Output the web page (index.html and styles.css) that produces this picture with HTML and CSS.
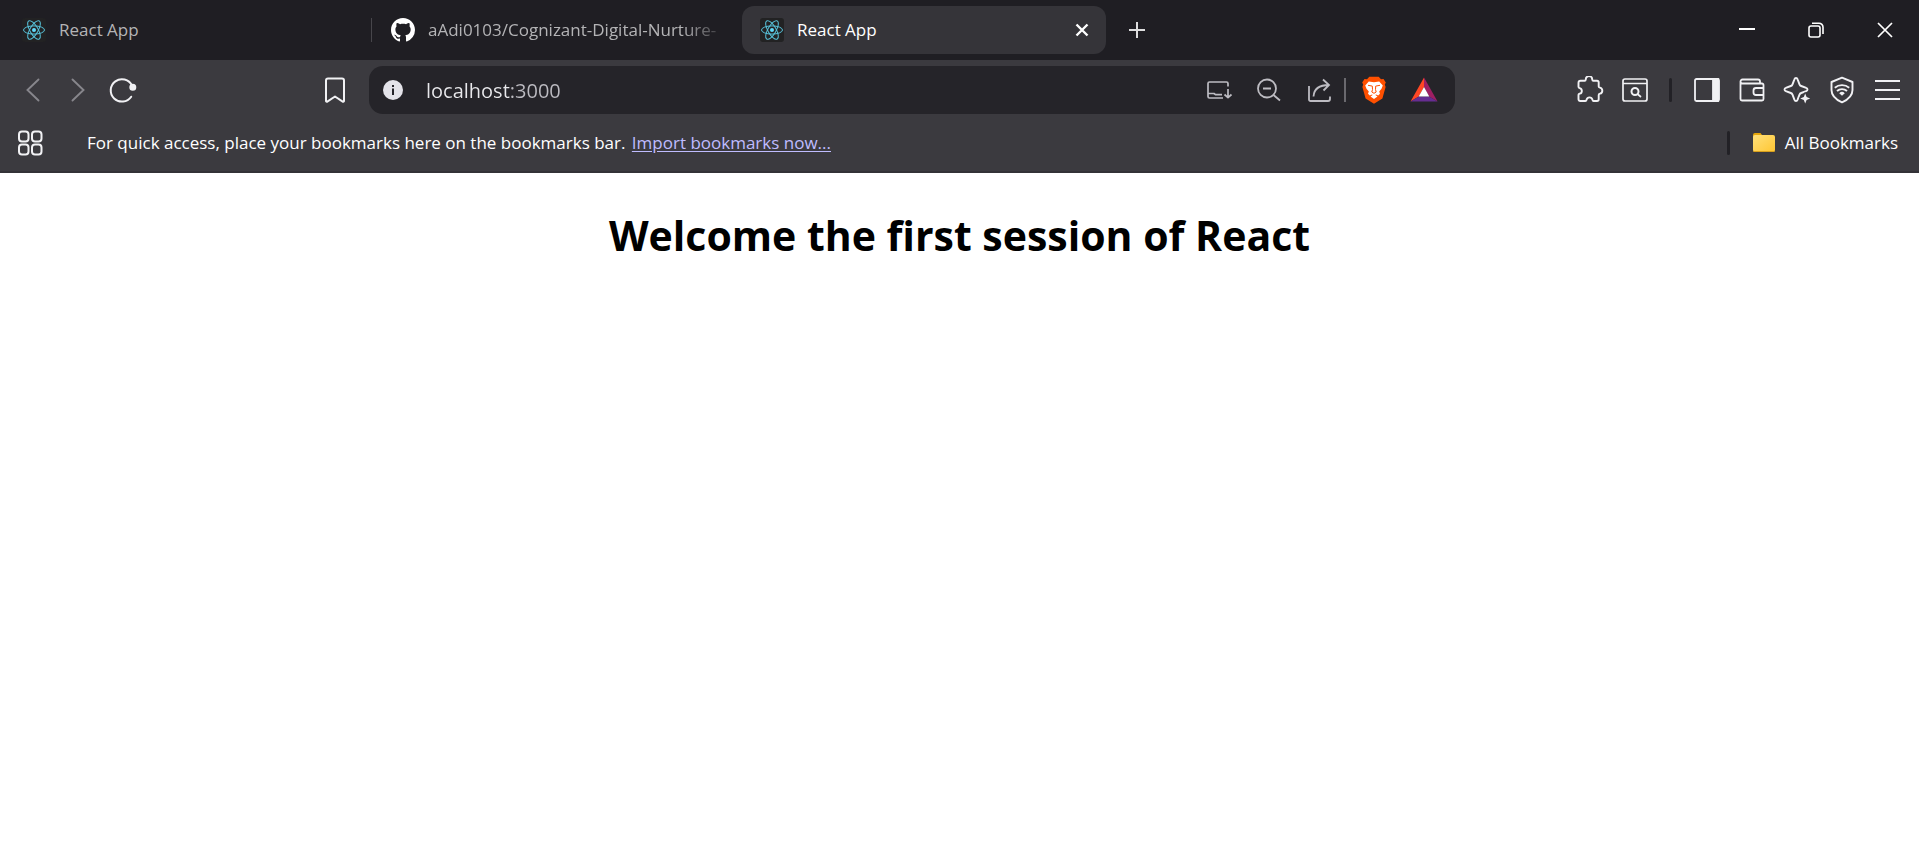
FILE: index.html
```html
<!DOCTYPE html>
<html lang="en">
<head>
<meta charset="utf-8">
<title>React App</title>
<link rel="stylesheet" href="styles.css">
</head>
<body>
<svg class="defs" aria-hidden="true">
  <symbol id="react" viewBox="0 0 24 24">
    <rect width="24" height="24" rx="3" fill="#222223"/>
    <g fill="none" stroke="#58c4dc" stroke-width="1">
      <ellipse cx="12" cy="12" rx="10.5" ry="4.1"/>
      <ellipse cx="12" cy="12" rx="10.5" ry="4.1" transform="rotate(60 12 12)"/>
      <ellipse cx="12" cy="12" rx="10.5" ry="4.1" transform="rotate(120 12 12)"/>
    </g>
    <circle cx="12" cy="12" r="2" fill="#61dafb"/>
  </symbol>
</svg>

<header class="browser">
  <div class="tabstrip">
    <nav class="tabs" aria-label="Tabs">
      <div class="tab">
        <svg class="icon-24"><use href="#react"/></svg>
        <span class="tab-title">React App</span>
      </div>
      <span class="tab-divider"></span>
      <div class="tab">
        <svg class="icon-24" viewBox="0 0 16 16" fill="#fff"><path d="M8 0C3.58 0 0 3.58 0 8c0 3.54 2.29 6.53 5.47 7.59.4.07.55-.17.55-.38 0-.19-.01-.82-.01-1.49-2.01.37-2.53-.49-2.69-.94-.09-.23-.48-.94-.82-1.13-.28-.15-.68-.52-.01-.53.63-.01 1.08.58 1.23.82.72 1.21 1.87.87 2.33.66.07-.52.28-.87.51-1.07-1.78-.2-3.64-.89-3.64-3.95 0-.87.31-1.59.82-2.15-.08-.2-.36-1.02.08-2.12 0 0 .67-.21 2.2.82.64-.18 1.32-.27 2-.27s1.36.09 2 .27c1.53-1.04 2.2-.82 2.2-.82.44 1.1.16 1.92.08 2.12.51.56.82 1.27.82 2.15 0 3.07-1.87 3.75-3.65 3.95.29.25.54.73.54 1.48 0 1.07-.01 1.93-.01 2.2 0 .21.15.46.55.38A8.01 8.01 0 0 0 16 8c0-4.42-3.58-8-8-8z"/></svg>
        <span class="tab-title tab-title-faded">aAdi0103/Cognizant-Digital-Nurture-</span>
      </div>
      <span class="tab-gap"></span>
      <div class="tab tab-active">
        <svg class="icon-24"><use href="#react"/></svg>
        <span class="tab-title">React App</span>
        <button class="tab-close" aria-label="Close tab"><svg class="icon-14" viewBox="0 0 14 14" fill="none" stroke="#fff" stroke-width="2.4"><path d="M1.5 1.5l11 11M12.5 1.5l-11 11"/></svg></button>
      </div>
      <button class="new-tab" aria-label="New tab"><svg class="icon-16" viewBox="0 0 16 16" fill="none" stroke="#dededf" stroke-width="2"><path d="M8 0v16M0 8h16"/></svg></button>
    </nav>
    <div class="window-controls">
      <button aria-label="Minimize"><svg class="icon-16" viewBox="0 0 16 16" fill="none" stroke="#fff" stroke-width="2"><path d="M0 7h16"/></svg></button>
      <button aria-label="Restore"><svg class="icon-16" viewBox="0 0 16 16" fill="none" stroke="#fff" stroke-width="1.6"><rect x="1" y="4" width="11" height="11" rx="2"/><path d="M4 1.2h7a4 4 0 0 1 4 4V12"/></svg></button>
      <button aria-label="Close"><svg class="icon-16" viewBox="0 0 16 16" fill="none" stroke="#fff" stroke-width="1.7"><path d="M1 1l14 14M15 1L1 15"/></svg></button>
    </div>
  </div>

  <div class="toolbar">
    <div class="nav-buttons">
      <button aria-label="Back" disabled><svg class="icon-28" viewBox="0 0 28 28" fill="none" stroke="#87868c" stroke-width="1.9" stroke-linecap="round"><path d="M19.500 3.500L8.500 14l11 10.500"/></svg></button>
      <button aria-label="Forward" disabled><svg class="icon-28" viewBox="0 0 28 28" fill="none" stroke="#87868c" stroke-width="1.900" stroke-linecap="round"><path d="M8.500 3.500l11 10.500-11 10.500"/></svg></button>
      <button aria-label="Reload"><svg class="icon-28" viewBox="0 0 28 28" fill="none" stroke="#f1f1f4" stroke-width="2" stroke-linecap="round"><path d="M23 9.500A11.200 11.200 0 1 0 22.200 20.700"/><circle cx="23.800" cy="11.300" r="2.500" fill="#f1f1f4"/></svg></button>
      <button class="bookmark" aria-label="Bookmark this tab"><svg class="icon-28" viewBox="0 0 28 28" fill="none" stroke="#f1f1f4" stroke-width="2" stroke-linejoin="round"><path d="M7 2.500h14a2 2 0 0 1 2 2V25a.8.8 0 0 1-1.300.6L14 20.500l-7.700 5.100A.8.8 0 0 1 5 25V4.500a2 2 0 0 1 2-2z"/></svg></button>
    </div>

    <div class="omnibox">
      <button class="site-info" aria-label="View site information"><svg class="icon-20" viewBox="0 0 20 20"><circle cx="10" cy="10" r="10" fill="#e4e3e9"/><path d="M9 5h2v2H9zM9 8.500h2V15H9z" fill="#252429"/></svg></button>
      <input class="url" type="text" value="localhost:3000" aria-label="Address">
      <button aria-label="Install app"><svg class="icon-28" viewBox="0 0 28 28" fill="none" stroke="#bdbcc2" stroke-width="1.700" stroke-linejoin="round"><path d="M23 10.500V7.500A1.500 1.500 0 0 0 21.500 6h-17A1.500 1.500 0 0 0 3 7.500v10h6l1.500 1.200H17M3 17.500v3a1.500 1.500 0 0 0 1.500 1.500H18M23 13v8.500M19.500 18.500l3.500 3.200 3.500-3.200"/></svg></button>
      <button aria-label="Zoom"><svg class="icon-28" viewBox="0 0 28 28" fill="none" stroke="#bdbcc2" stroke-width="1.800"><circle cx="12" cy="12.500" r="9"/><path d="M8 12.500h8M18.500 19l6.500 5.500"/></svg></button>
      <button aria-label="Share"><svg class="icon-28" viewBox="0 0 28 28" fill="none" stroke="#bdbcc2" stroke-width="1.800"><path d="M4 10v13.500A1.500 1.500 0 0 0 5.500 25H23a2 2 0 0 0 2-2v-2.500M8.500 20.500C9 12.500 14 9 24 9M18 3.500L24 9l-5.500 5.500"/></svg></button>
      <span class="omnibox-divider"></span>
      <button aria-label="Brave Shields"><svg class="icon-28" viewBox="0 0 28 28"><path d="M9.300.8h9.400l2.300 2.400 2.500-.3 2.300 3.600-1 2 .8 2.500-3.200 11.500L14 27.800 5.600 22.500 2.400 11l.8-2.500-1-2 2.300-3.600 2.500.3z" fill="#ff5000"/><path d="M14 6.300l5.200-.8 3.600 4-1.300 3.200-2.300 2.700.8 2.300-1.800 1.800-2.200-1-2 1.500-2-1.500-2.200 1L8 17.700l.8-2.300-2.300-2.700-1.300-3.200 3.600-4z" fill="#fff"/><path d="M8 9.300l4.300.8.2 3.500-.7 2.400 2.200 1.300 2.200-1.300-.7-2.400.2-3.500 4.300-.8" fill="none" stroke="#ff5000" stroke-width="1"/><path d="M10.500 20.500L14 18l3.500 2.500L14 23z" fill="#fff"/></svg></button>
      <button aria-label="Brave Rewards"><svg class="icon-28" viewBox="0 0 28 28"><path d="M14 1.500L.5 25.500l8.300-5L14 11z" fill="#ff4724"/><path d="M14 1.500l13.500 24-8.300-5L14 11z" fill="#9e1f63"/><path d="M.5 25.500h27l-8.300-5H8.800z" fill="#662d91"/><path d="M14 11l5.300 9.500H8.700z" fill="#fff"/></svg></button>
    </div>

    <div class="tool-buttons">
      <button aria-label="Extensions"><svg class="icon-28" viewBox="0 0 28 28" fill="none" stroke="#f1f1f4" stroke-width="1.900" stroke-linejoin="round"><path d="M4.500 4.800h4.300c.8 0 .9-.8 1-1.500a3.200 3.200 0 0 1 6.400 0c.1.700.2 1.500 1 1.500H21c1 0 1.700.7 1.700 1.700v4c0 .9.500 1 1.300 1.200a3.100 3.100 0 0 1 0 6c-.8.200-1.300.4-1.300 1.300v4.300c0 1-.7 1.700-1.700 1.700h-3.500c-.9 0-.9-.6-1.100-1.400a3 3 0 0 0-5.800 0c-.2.800-.3 1.400-1.200 1.400H4.200c-1 0-1.700-.7-1.700-1.700v-4.500c0-.8.500-.9 1.200-1.100a2.900 2.900 0 0 0 0-5.600c-.7-.2-1.200-.5-1.200-1.300V6.800c0-1.200.8-2 2-2z"/></svg></button>
      <button aria-label="Search tabs"><svg class="icon-28" viewBox="0 0 28 28" fill="none" stroke="#f1f1f4" stroke-width="1.700"><rect x="2" y="3" width="24" height="22" rx="2"/><path d="M2 7.500h24M16.500 18l3.500 3"/><circle cx="14" cy="15.500" r="3.500" stroke-width="2"/></svg></button>
      <span class="divider"></span>
      <button aria-label="Sidebar"><svg class="icon-28" viewBox="0 0 28 28" fill="none" stroke="#f1f1f4" stroke-width="1.800"><rect x="2" y="3" width="24" height="22" rx="1.500"/><path d="M20 3h5v22h-5z" fill="#f1f1f4"/></svg></button>
      <button aria-label="Wallet"><svg class="icon-28" viewBox="0 0 28 28" fill="none" stroke="#f1f1f4" stroke-width="1.800" stroke-linejoin="round"><path d="M2.500 5.500V23a1.500 1.500 0 0 0 1.500 1.500h20a1.500 1.500 0 0 0 1.500-1.500V9A1.500 1.500 0 0 0 24 7.500H4.500a2 2 0 0 1 0-4H20a2 2 0 0 1 2 2v2M25.500 12H18a2.500 2.500 0 0 0-2.500 2.500v2A2.500 2.500 0 0 0 18 19h7.500"/></svg></button>
      <button aria-label="Leo AI"><svg class="icon-28" viewBox="0 0 28 28" fill="none" stroke="#f1f1f4" stroke-width="1.900" stroke-linejoin="round"><path d="M11.400 3.300c.6-1.700 2.600-1.700 3.200 0l1.900 5c.3.800.9 1.400 1.700 1.700l5 1.900c1.700.6 1.700 2.600 0 3.200l-5 1.900c-.8.300-1.400.9-1.700 1.700l-1.900 5c-.6 1.700-2.600 1.700-3.200 0l-1.900-5c-.3-.8-.9-1.400-1.700-1.700l-5-1.900c-1.700-.6-1.700-2.600 0-3.200l5-1.900c.8-.3 1.400-.9 1.700-1.700z"/><path d="M22.200 17.500l1.400 3.600 3.600 1.400-3.600 1.400-1.400 3.600-1.400-3.600-3.600-1.400 3.600-1.400z" fill="#f1f1f4" stroke="#3b3a3f" stroke-width="2.400" paint-order="stroke"/></svg></button>
      <button aria-label="VPN"><svg class="icon-28" viewBox="0 0 28 28" fill="none" stroke="#f1f1f4" stroke-width="1.900" stroke-linejoin="round"><path d="M14 1.700L24.500 6v8c0 5.500-4 9.500-10.500 12.300C7.500 23.500 3.500 19.500 3.500 14V6z"/><path d="M6.800 11.800a11 11 0 0 1 14.400 0M9 15a7.600 7.600 0 0 1 10 0"/><path d="M14 19.800l-2.800-2.600a4 4 0 0 1 5.600 0z" fill="#f1f1f4" stroke="none"/></svg></button>
      <button aria-label="Menu"><svg class="icon-28" viewBox="0 0 28 28" fill="none" stroke="#f1f1f4" stroke-width="2"><path d="M2 5h25M2 14h25M2 23h25"/></svg></button>
    </div>
  </div>

  <div class="bookmarks-bar">
    <button class="apps" aria-label="Apps"><svg class="icon-28" viewBox="0 0 28 28" fill="none" stroke="#f1f1f4" stroke-width="2"><rect x="3" y="2.500" width="9.500" height="10" rx="3"/><rect x="16" y="2.500" width="9.500" height="10" rx="3"/><rect x="3" y="15.500" width="9.500" height="10" rx="3"/><rect x="16" y="15.500" width="9.500" height="10" rx="3"/></svg></button>
    <p class="hint">For quick access, place your bookmarks here on the bookmarks bar. <a href="#import">Import bookmarks now...</a></p>
    <span class="divider"></span>
    <button class="all-bookmarks">
      <svg class="icon-24" viewBox="0 0 24 24"><defs><linearGradient id="folder" x1="0" y1="0" x2="1" y2="1"><stop offset="0" stop-color="#ffe07a"/><stop offset="1" stop-color="#ffc632"/></linearGradient></defs><path d="M1 4a2 2 0 0 1 2-2h5.500L10 4l2 3H1z" fill="#e5a50a"/><rect x="1" y="4" width="22" height="17" rx="2" fill="url(#folder)"/><path d="M1.500 20.500h21" stroke="#d9a01c"/></svg>
      <span>All Bookmarks</span>
    </button>
  </div>
</header>

<main class="page">
  <h1>Welcome the first session of React</h1>
</main>
</body>
</html>
```
FILE: styles.css
```css
* {
  box-sizing: border-box;
}

body {
  margin: 0;
  background: #fff;
  color: #000;
  font-family: "Open Sans", "Noto Sans", sans-serif;
}

button {
  display: flex;
  align-items: center;
  justify-content: center;
  flex: none;
  padding: 0;
  border: 0;
  background: none;
  color: inherit;
  font: inherit;
}

svg {
  display: block;
  flex: none;
}

.defs { position: absolute; width: 0; height: 0; }
.icon-14 { width: 14px; height: 14px; }
.icon-16 { width: 16px; height: 16px; }
.icon-20 { width: 20px; height: 20px; }
.icon-24 { width: 24px; height: 24px; }
.icon-28 { width: 28px; height: 28px; }

.browser {
  background: #3b3a3f;
  border-bottom: 2px solid #333237;
  color: #fff;
  font-size: 17px;
  line-height: 24px;
}

/* Tab strip */
.tabstrip {
  display: flex;
  justify-content: space-between;
  height: 60px;
  background: #1f1e23;
}

.tabs {
  display: flex;
  align-items: center;
  flex: 1;
  min-width: 0;
  padding-left: 4px;
}

.tab {
  display: flex;
  align-items: center;
  gap: 13px;
  flex: 0 1 364px;
  min-width: 0;
  height: 48px;
  padding: 0 8px 0 18px;
  border-radius: 12px;
  color: #b4b4b6;
}

.tab-active {
  background: #353439;
  color: #fff;
}

.tab-close {
  width: 32px;
  height: 32px;
}

.tab-title {
  flex: 1;
  min-width: 0;
  overflow: hidden;
  white-space: nowrap;
}

.tab-title-faded {
  mask-image: linear-gradient(to right, #000 calc(100% - 48px), transparent);
}

.tab-divider {
  width: 1px;
  height: 24px;
  margin: 0 1px 0 3px;
  background: #47464b;
}

.tab-gap { width: 5px; }

.new-tab {
  width: 48px;
  height: 48px;
  margin-left: 7px;
}

.window-controls { display: flex; }
.window-controls button { width: 69px; }

/* Toolbar */
.toolbar {
  display: grid;
  grid-template-columns: 369px minmax(0, 1fr) 464px;
  padding-top: 6px;
}

.nav-buttons,
.tool-buttons {
  display: flex;
  align-items: center;
}

.nav-buttons { padding: 0 12px 0 10px; }
.nav-buttons button,
.tool-buttons button { width: 45px; height: 48px; }
.bookmark { margin-left: auto; }

.tool-buttons {
  justify-content: flex-end;
  padding-right: 10px;
}

.divider {
  flex: none;
  width: 3px;
  height: 24px;
  margin: 0 12px;
  border-radius: 2px;
  background: #222126;
}

.omnibox {
  display: flex;
  align-items: center;
  height: 48px;
  padding: 0 6px 0 14px;
  border-radius: 14px;
  background: #252429;
}

.omnibox button { width: 50px; height: 48px; }
.omnibox .site-info { width: 20px; }

.url {
  flex: 1;
  min-width: 0;
  height: 32px;
  margin-left: 23px;
  padding: 0;
  border: 0;
  outline: 0;
  background: linear-gradient(to right, #e9e9ec 84px, #bdbcc2 84px) text;
  color: #e9e9ec;
  font: inherit;
  font-size: 20px;
  -webkit-text-fill-color: transparent;
}

.omnibox-divider {
  width: 2px;
  height: 24px;
  margin-right: 3px;
  background: #6a696e;
}

/* Bookmarks bar */
.bookmarks-bar {
  display: flex;
  align-items: center;
  height: 57px;
  padding-right: 21px;
}

.apps {
  width: 28px;
  height: 48px;
  margin-left: 16px;
}

.hint {
  flex: 1;
  margin: 0 0 0 43px;
}

.hint a {
  margin-left: 2px;
  color: #bfbcff;
  text-underline-offset: 2px;
}

.bookmarks-bar .divider { margin: 0 22px 0 12px; }

.all-bookmarks { gap: 9px; }

/* Page */
.page h1 {
  margin: 32px 8px;
  font-size: 41px;
  font-weight: 700;
  line-height: 60px;
  text-align: center;
}
```
